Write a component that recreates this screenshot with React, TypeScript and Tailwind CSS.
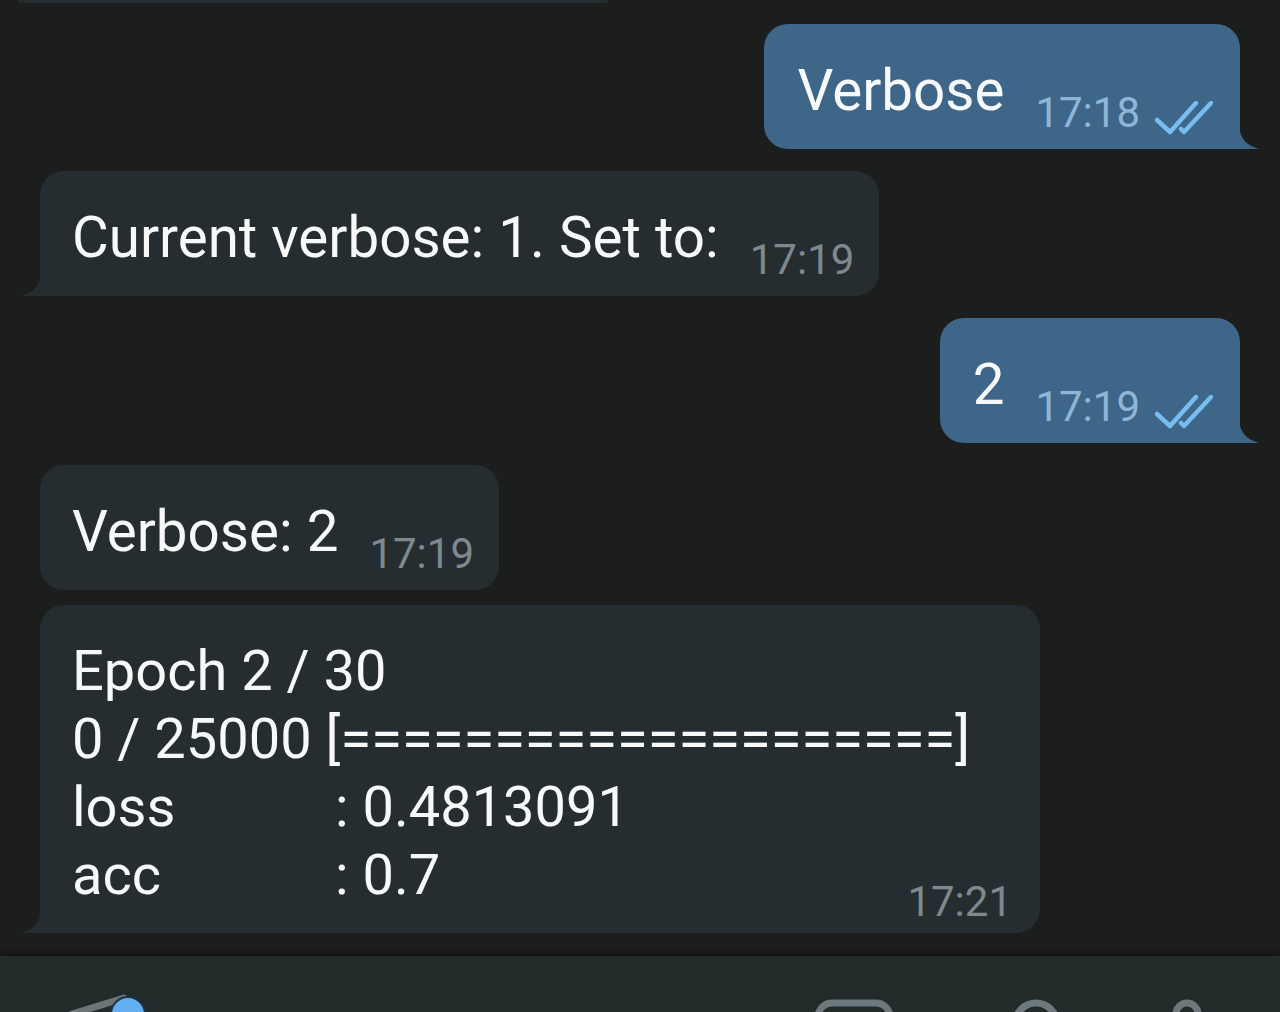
import React from "react";

const font = { fontFamily: "Roboto, 'Noto Sans', sans-serif" };

function TailRight({ color }: { color: string }) {
  return (
    <svg className="absolute bottom-0 -right-[20px]" width="21" height="26" viewBox="0 0 21 26">
      <path d="M0 0 C0 14 6 22 20 26 L0 26 Z" fill={color} />
    </svg>
  );
}

function TailLeft({ color }: { color: string }) {
  return (
    <svg className="absolute bottom-0 -left-[20px]" width="21" height="26" viewBox="0 0 21 26">
      <path d="M21 0 C21 14 15 22 1 26 L21 26 Z" fill={color} />
    </svg>
  );
}

function Checks() {
  return (
    <svg width="58" height="34" viewBox="0 0 58 34" className="ml-[15px] mb-[2px]" fill="none">
      <path d="M2 19 L15 31 L41 2" stroke="#79bdf0" strokeWidth="4.5" strokeLinecap="round" strokeLinejoin="round" />
      <path d="M26 28 L29 31 L56 2" stroke="#79bdf0" strokeWidth="4.5" strokeLinecap="round" strokeLinejoin="round" />
    </svg>
  );
}

function Outgoing({ text, time }: { text: string; time: string }) {
  return (
    <div className="flex justify-end pr-[40px]">
      <div className="relative h-[125px] bg-[#3e6689] rounded-[24px] rounded-br-none pl-[33px] pr-[27px] pt-[34px] pb-[12px] flex items-end">
        <span className="text-[56.5px] leading-[66px] text-[#f7f9fb] mb-[13px]">{text}</span>
        <span className="ml-[31px] text-[42px] leading-[49px] text-[#8fb6d6]">{time}</span>
        <Checks />
        <TailRight color="#3e6689" />
      </div>
    </div>
  );
}

function Incoming({ text, time, tail }: { text: string; time: string; tail?: boolean }) {
  return (
    <div className="flex pl-[40px]">
      <div className={"relative h-[125px] bg-[#262d31] rounded-[24px] pl-[32px] pr-[25px] pt-[34px] pb-[12px] flex items-end " + (tail ? "rounded-bl-none" : "")}>
        <span className="text-[56.5px] leading-[66px] text-[#f7f8f8] mb-[13px] whitespace-nowrap">{text}</span>
        <span className="ml-[31px] text-[42px] leading-[49px] text-[#7e898e]">{time}</span>
        {tail && <TailLeft color="#262d31" />}
      </div>
    </div>
  );
}

export default function App() {
  return (
    <div className="w-[1280px] h-[1012px] bg-[#1c1e1e] flex flex-col overflow-hidden" style={font}>
      <div className="h-[3px] w-[590px] ml-[18px] bg-[#262d31] rounded-b-[3px] shrink-0" />
      <div className="flex flex-col flex-1 pt-[21px]">
        <Outgoing text="Verbose" time="17:18" />
        <div className="h-[22px]" />
        <Incoming text="Current verbose: 1. Set to:" time="17:19" tail />
        <div className="h-[22px]" />
        <Outgoing text="2" time="17:19" />
        <div className="h-[22px]" />
        <Incoming text="Verbose: 2" time="17:19" />
        <div className="h-[15px]" />
        <div className="flex pl-[40px]">
          <div className="relative w-[1000px] h-[328px] bg-[#262d31] rounded-[24px] rounded-bl-none pl-[32px] pr-[28px] pt-[32px] pb-[25px] flex flex-col text-[56px] leading-[68px] text-[#f7f8f8] whitespace-nowrap">
            <span>Epoch 2 / 30</span>
            <span>0 / 25000 [====================]</span>
            <div className="flex">
              <span className="w-[263px]">loss</span>
              <span>: 0.4813091</span>
            </div>
            <div className="flex items-end">
              <span className="w-[263px]">acc</span>
              <span>: 0.7</span>
              <span className="ml-auto mb-[-17px] text-[42px] leading-[49px] text-[#7e898e]">17:21</span>
            </div>
            <TailLeft color="#262d31" />
          </div>
        </div>
      </div>
      <div className="h-[56px] shrink-0 bg-[#232a2a] shadow-[0_-3px_4px_rgba(0,0,0,0.35)] relative overflow-hidden">
        <svg className="absolute left-0 top-0" width="1280" height="56" viewBox="0 0 1280 56" fill="none">
          <path d="M72 58 L124 42" stroke="#6c7679" strokeWidth="7" strokeLinecap="round" />
          <circle cx="128" cy="58" r="17" fill="#62aef0" stroke="#1d3340" strokeWidth="2" />
          <rect x="818" y="47" width="72" height="50" rx="14" stroke="#6d787d" strokeWidth="7" />
          <circle cx="1036" cy="68" r="21" stroke="#6d787d" strokeWidth="7" />
          <rect x="1176" y="47" width="22" height="40" rx="11" stroke="#6d787d" strokeWidth="7" />
        </svg>
      </div>
    </div>
  );
}
